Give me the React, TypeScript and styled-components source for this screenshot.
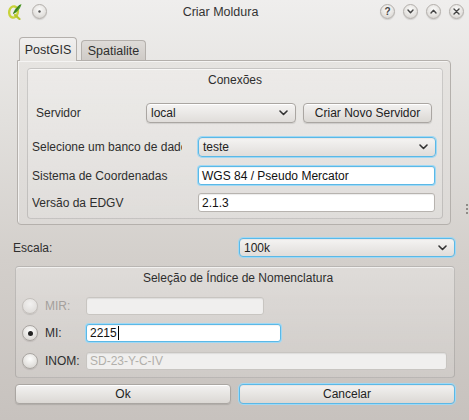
import styled, { createGlobalStyle, css } from "styled-components";

/*--------------------------
    Global
--------------------------*/
const GlobalReset = createGlobalStyle`
    html, body {
        margin: 0;
        padding: 0;
        background: #c8c3bf;
    }
    * {
        box-sizing: border-box;
    }
`;

/*--------------------------
    Styled
--------------------------*/
const TEXT = "12px";

const Window = styled.div`
    position: relative;
    display: flex;
    flex-direction: column;
    width: 469px;
    height: 420px;
    overflow: hidden;
    color: #2e2e2e;
    font-family: "Liberation Sans", Arial, sans-serif;
    font-size: ${TEXT};
    background: linear-gradient(180deg, #efeeed 0px, #e2e0dd 120px, #d3cfcb 260px, #c7c2be 420px);
`;

const TitleBar = styled.div`
    display: flex;
    align-items: center;
    height: 23px;
    padding: 0 5px 0 7px;
    flex-shrink: 0;
`;

const TitleText = styled.div`
    flex: 1;
    text-align: center;
    font-size: 12.5px;
    color: #333;
    padding-left: 14px;
`;

const TitleGroup = styled.div`
    display: flex;
    align-items: center;
    gap: 8px;
`;

const RoundButton = styled.div`
    display: flex;
    align-items: center;
    justify-content: center;
    width: 15px;
    height: 15px;
    border-radius: 50%;
    border: 1px solid #b3afab;
    background: radial-gradient(circle at 50% 35%, #fbfbfa 0%, #e4e2df 60%, #cfcbc7 100%);
    box-shadow: 0 1px 1px rgba(0, 0, 0, 0.12);
    color: #444;
    font-size: 10px;
    font-weight: bold;
    line-height: 1;
`;

const TabArea = styled.div`
    display: flex;
    flex-direction: column;
    margin: 14px 18px 0 17px;
`;

const TabBar = styled.div`
    display: flex;
    align-items: flex-end;
    gap: 4px;
    height: 23px;
    padding-left: 2px;
`;

const Tab = styled.div<{ $active?: boolean }>`
    display: flex;
    align-items: center;
    justify-content: center;
    border: 1px solid #b4b0ac;
    border-bottom: none;
    border-radius: 4px 4px 0 0;
    font-size: 12.5px;
    color: #2e2e2e;

    ${(p) =>
        p.$active
            ? css`
                  position: relative;
                  z-index: 1;
                  width: 58px;
                  height: 24px;
                  margin-bottom: -1px;
                  background: linear-gradient(180deg, #f1f0ef, #e6e4e1);
              `
            : css`
                  width: 65px;
                  height: 20px;
                  background: linear-gradient(180deg, #dedbd8, #cfcbc7);
              `}
`;

const TabPane = styled.div`
    display: flex;
    flex-direction: column;
    height: 165px;
    padding: 7px 7px 5px 9px;
    border: 1px solid #b4b0ac;
    border-radius: 0 4px 4px 4px;
    background: linear-gradient(180deg, #e6e4e1, #dcd9d6);
    box-shadow: inset 1px 1px 0 rgba(255, 255, 255, 0.6);
`;

const GroupBox = styled.div<{ $height: number }>`
    display: flex;
    flex-direction: column;
    height: ${(p) => p.$height}px;
    border: 1px solid rgba(0, 0, 0, 0.14);
    border-radius: 4px;
    background: linear-gradient(180deg, rgba(255, 255, 255, 0.28), rgba(255, 255, 255, 0.1));
    box-shadow: inset 0 1px 0 rgba(255, 255, 255, 0.6);
`;

const GroupTitle = styled.div`
    height: 16px;
    margin-top: 3px;
    line-height: 16px;
    text-align: center;
    font-size: ${TEXT};
`;

const Row = styled.div<{ $top: number; $left?: number; $height?: number }>`
    display: flex;
    align-items: center;
    height: ${(p) => p.$height ?? 20}px;
    margin-top: ${(p) => p.$top}px;
    padding-left: ${(p) => p.$left ?? 0}px;
`;

const Label = styled.div<{ $width: number; $disabled?: boolean }>`
    width: ${(p) => p.$width}px;
    flex-shrink: 0;
    overflow: hidden;
    white-space: nowrap;
    font-size: ${TEXT};
    color: ${(p) => (p.$disabled ? "#a4a09c" : "#2e2e2e")};
`;

const focusRing = css`
    border-color: #5bb8e6;
    box-shadow: 0 0 0 1px #9fd8f4, inset 0 1px 1px rgba(0, 0, 0, 0.05);
`;

const Combo = styled.div<{ $width: number; $focus?: boolean; $ml?: number }>`
    display: flex;
    align-items: center;
    justify-content: space-between;
    width: ${(p) => p.$width}px;
    height: 100%;
    margin-left: ${(p) => p.$ml ?? 0}px;
    padding: 0 7px 0 4px;
    border: 1px solid #aaa6a2;
    border-radius: 4px;
    background: linear-gradient(180deg, #f5f4f3, #e0ddda);
    box-shadow: 0 1px 1px rgba(0, 0, 0, 0.1), inset 0 1px 0 #fff;
    font-size: ${TEXT};
    color: #222;
    ${(p) => p.$focus && focusRing}
`;

const PushButton = styled.div<{ $width: number; $focus?: boolean; $ml?: number }>`
    display: flex;
    align-items: center;
    justify-content: center;
    width: ${(p) => p.$width}px;
    height: 100%;
    margin-left: ${(p) => p.$ml ?? 0}px;
    border: 1px solid #aaa6a2;
    border-radius: 4px;
    background: linear-gradient(180deg, #f3f2f1, #dbd8d4);
    box-shadow: 0 1px 1px rgba(0, 0, 0, 0.12), inset 0 1px 0 #fff;
    font-size: ${TEXT};
    color: #222;
    ${(p) => p.$focus && focusRing}
`;

const LineEdit = styled.div<{ $width: number; $focus?: boolean; $disabled?: boolean }>`
    display: flex;
    align-items: center;
    width: ${(p) => p.$width}px;
    height: 100%;
    padding: 0 3px;
    border: 1px solid #b7b3af;
    border-radius: 3px;
    background: #fff;
    box-shadow: inset 0 1px 1px rgba(0, 0, 0, 0.08);
    font-size: ${TEXT};
    color: #111;
    white-space: nowrap;
    ${(p) =>
        p.$disabled &&
        css`
            border-color: #c8c5c1;
            background: #f0efee;
            color: #b2afab;
        `}
    ${(p) => p.$focus && focusRing}
`;

const Caret = styled.span`
    display: inline-block;
    width: 1px;
    height: 14px;
    margin-left: 1px;
    background: #000;
`;

const Radio = styled.div<{ $checked?: boolean; $disabled?: boolean }>`
    display: flex;
    align-items: center;
    justify-content: center;
    width: 16px;
    height: 16px;
    flex-shrink: 0;
    margin-right: 7px;
    border-radius: 50%;
    border: 1px solid ${(p) => (p.$disabled ? "#c4c0bc" : "#aaa6a2")};
    background: ${(p) =>
        p.$disabled
            ? "radial-gradient(circle at 50% 35%, #f2f1f0, #dad7d4)"
            : "radial-gradient(circle at 50% 35%, #fdfdfc, #e4e2df 60%, #d0ccc8)"};
    box-shadow: 0 1px 1px rgba(0, 0, 0, 0.1);

    &::after {
        content: "";
        display: ${(p) => (p.$checked ? "block" : "none")};
        width: 5px;
        height: 5px;
        border-radius: 50%;
        background: #222;
    }
`;

const ScaleRow = styled.div`
    display: flex;
    align-items: center;
    height: 19px;
    margin: 13px 14px 0 13px;
`;

const SelectionGroup = styled(GroupBox)`
    margin: 9px 14px 0 15px;
    padding-left: 6px;
`;

const ButtonRow = styled.div`
    display: flex;
    gap: 8px;
    height: 20px;
    margin: 6px 14px 0 15px;
`;

const Grip = styled.div`
    position: absolute;
    right: 1px;
    top: 204px;
    display: flex;
    flex-direction: column;
    gap: 2px;

    span {
        width: 2px;
        height: 2px;
        background: #8f8b87;
    }
`;

/*--------------------------
    Icons
--------------------------*/
const Chevron = ({ up = false }: { up?: boolean }) => (
    <svg width="9" height="6" viewBox="0 0 9 6">
        <path
            d={up ? "M1 5 L4.5 1.5 L8 5" : "M1 1 L4.5 4.5 L8 1"}
            fill="none"
            stroke="#333"
            strokeWidth="1.6"
            strokeLinecap="round"
            strokeLinejoin="round"
        />
    </svg>
);

const SmallChevron = ({ up = false }: { up?: boolean }) => (
    <svg width="7" height="5" viewBox="0 0 7 5">
        <path
            d={up ? "M1 4 L3.5 1.3 L6 4" : "M1 1 L3.5 3.7 L6 1"}
            fill="none"
            stroke="#444"
            strokeWidth="1.4"
            strokeLinecap="round"
            strokeLinejoin="round"
        />
    </svg>
);

const CloseGlyph = () => (
    <svg width="7" height="7" viewBox="0 0 7 7">
        <path d="M1 1 L6 6 M6 1 L1 6" stroke="#444" strokeWidth="1.4" strokeLinecap="round" />
    </svg>
);

const QgisLogo = () => (
    <svg width="16" height="17" viewBox="0 0 16 17">
        <ellipse cx="6.5" cy="9" rx="4.3" ry="5.6" fill="none" stroke="#c9d33a" strokeWidth="2.4" transform="rotate(12 6.5 9)" />
        <path d="M8 12 L12.5 16" stroke="#b6c62c" strokeWidth="2.2" strokeLinecap="round" />
        <path d="M6 11 C7 7 10 3 14.5 1 C13.5 5 11 9 6 11 Z" fill="#4e9a2a" />
        <path d="M6.5 10.5 L13 2" stroke="#2f6d17" strokeWidth="0.8" />
    </svg>
);

/*--------------------------
    Main
--------------------------*/
const App = () => {
    return (
        <>
            <GlobalReset />
            <Window>
                <TitleBar>
                    <TitleGroup>
                        <QgisLogo />
                        <RoundButton style={{ marginLeft: 1 }}>
                            <svg width="3" height="3" viewBox="0 0 3 3">
                                <circle cx="1.5" cy="1.5" r="1.2" fill="#555" />
                            </svg>
                        </RoundButton>
                    </TitleGroup>
                    <TitleText>Criar Moldura</TitleText>
                    <TitleGroup>
                        <RoundButton>?</RoundButton>
                        <RoundButton>
                            <SmallChevron />
                        </RoundButton>
                        <RoundButton>
                            <SmallChevron up />
                        </RoundButton>
                        <RoundButton>
                            <CloseGlyph />
                        </RoundButton>
                    </TitleGroup>
                </TitleBar>

                <TabArea>
                    <TabBar>
                        <Tab $active>PostGIS</Tab>
                        <Tab>Spatialite</Tab>
                    </TabBar>
                    <TabPane>
                        <GroupBox $height={152}>
                            <GroupTitle>Conexões</GroupTitle>

                            <Row $top={15} $left={8}>
                                <Label $width={110}>Servidor</Label>
                                <Combo $width={150}>
                                    <span>local</span>
                                    <Chevron />
                                </Combo>
                                <PushButton $width={129} $ml={7}>
                                    Criar Novo Servidor
                                </PushButton>
                            </Row>

                            <Row $top={14} $left={4}>
                                <Label $width={150}>Selecione um banco de dados</Label>
                                <Combo $width={238} $ml={16} $focus>
                                    <span>teste</span>
                                    <Chevron />
                                </Combo>
                            </Row>

                            <Row $top={9} $left={4} $height={19}>
                                <Label $width={166}>Sistema de Coordenadas</Label>
                                <LineEdit $width={237} $focus>
                                    WGS 84 / Pseudo Mercator
                                </LineEdit>
                            </Row>

                            <Row $top={8} $left={4} $height={19}>
                                <Label $width={166}>Versão da EDGV</Label>
                                <LineEdit $width={237}>2.1.3</LineEdit>
                            </Row>
                        </GroupBox>
                    </TabPane>
                </TabArea>

                <ScaleRow>
                    <Label $width={226}>Escala:</Label>
                    <Combo $width={216} $focus>
                        <span>100k</span>
                        <Chevron />
                    </Combo>
                </ScaleRow>

                <SelectionGroup $height={112}>
                    <GroupTitle>Seleção de Índice de Nomenclatura</GroupTitle>

                    <Row $top={11} $height={18}>
                        <Radio $disabled />
                        <Label $width={41} $disabled>
                            MIR:
                        </Label>
                        <LineEdit $width={178} $disabled />
                    </Row>

                    <Row $top={9} $height={18}>
                        <Radio $checked />
                        <Label $width={41}>MI:</Label>
                        <LineEdit $width={195} $focus>
                            2215
                            <Caret />
                        </LineEdit>
                    </Row>

                    <Row $top={10} $height={18}>
                        <Radio />
                        <Label $width={41}>INOM:</Label>
                        <LineEdit $width={361} $disabled>
                            SD-23-Y-C-IV
                        </LineEdit>
                    </Row>
                </SelectionGroup>

                <ButtonRow>
                    <PushButton $width={216}>Ok</PushButton>
                    <PushButton $width={216} $focus>
                        Cancelar
                    </PushButton>
                </ButtonRow>

                <Grip>
                    <span />
                    <span />
                    <span />
                </Grip>
            </Window>
        </>
    );
};

export default App;
